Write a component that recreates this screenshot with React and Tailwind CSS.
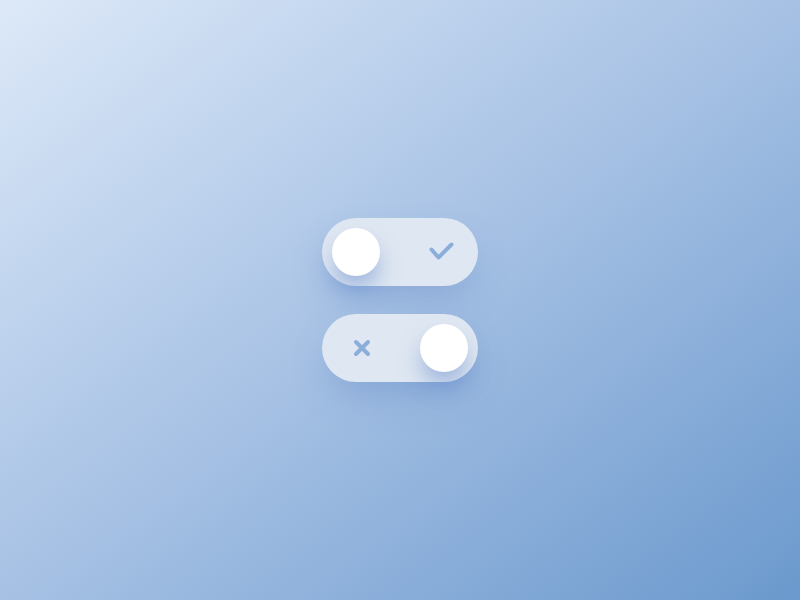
const CheckMark = () => (
  <svg width="25" height="20" viewBox="0 0 25 20" fill="none">
    <path
      d="M2.5 7.5 L9.5 15.5 L22.5 2.5"
      stroke="#8caedb"
      strokeWidth="4"
      strokeLinecap="round"
      strokeLinejoin="round"
    />
  </svg>
);

const Cross = () => (
  <svg width="18" height="18" viewBox="0 0 18 18" fill="none">
    <path
      d="M3 3 L15 15 M15 3 L3 15"
      stroke="#8caedb"
      strokeWidth="4"
      strokeLinecap="round"
    />
  </svg>
);

const Toggle = ({ on }) => (
  <div
    className={`flex items-center w-[156px] h-[68px] rounded-full bg-[#dfe7f2] p-[10px] shadow-[0_18px_36px_-8px_rgba(80,120,190,0.35)] ${
      on ? "flex-row-reverse" : "flex-row"
    }`}
  >
    <div className="w-12 h-12 shrink-0 rounded-full bg-white shadow-[0_14px_22px_-2px_rgba(90,130,200,0.5)]" />
    <div
      className={`flex-1 flex items-center ${
        on ? "justify-start pl-[21px]" : "justify-end pr-[14px]"
      }`}
    >
      {on ? <Cross /> : <CheckMark />}
    </div>
  </div>
);

export default function App() {
  return (
    <div className="w-[800px] h-[600px] flex flex-col items-center justify-center gap-7 bg-gradient-to-br from-[#dde9f8] via-[#a6c1e4] to-[#6b99cd]">
      <Toggle on={false} />
      <Toggle on={true} />
    </div>
  );
}
